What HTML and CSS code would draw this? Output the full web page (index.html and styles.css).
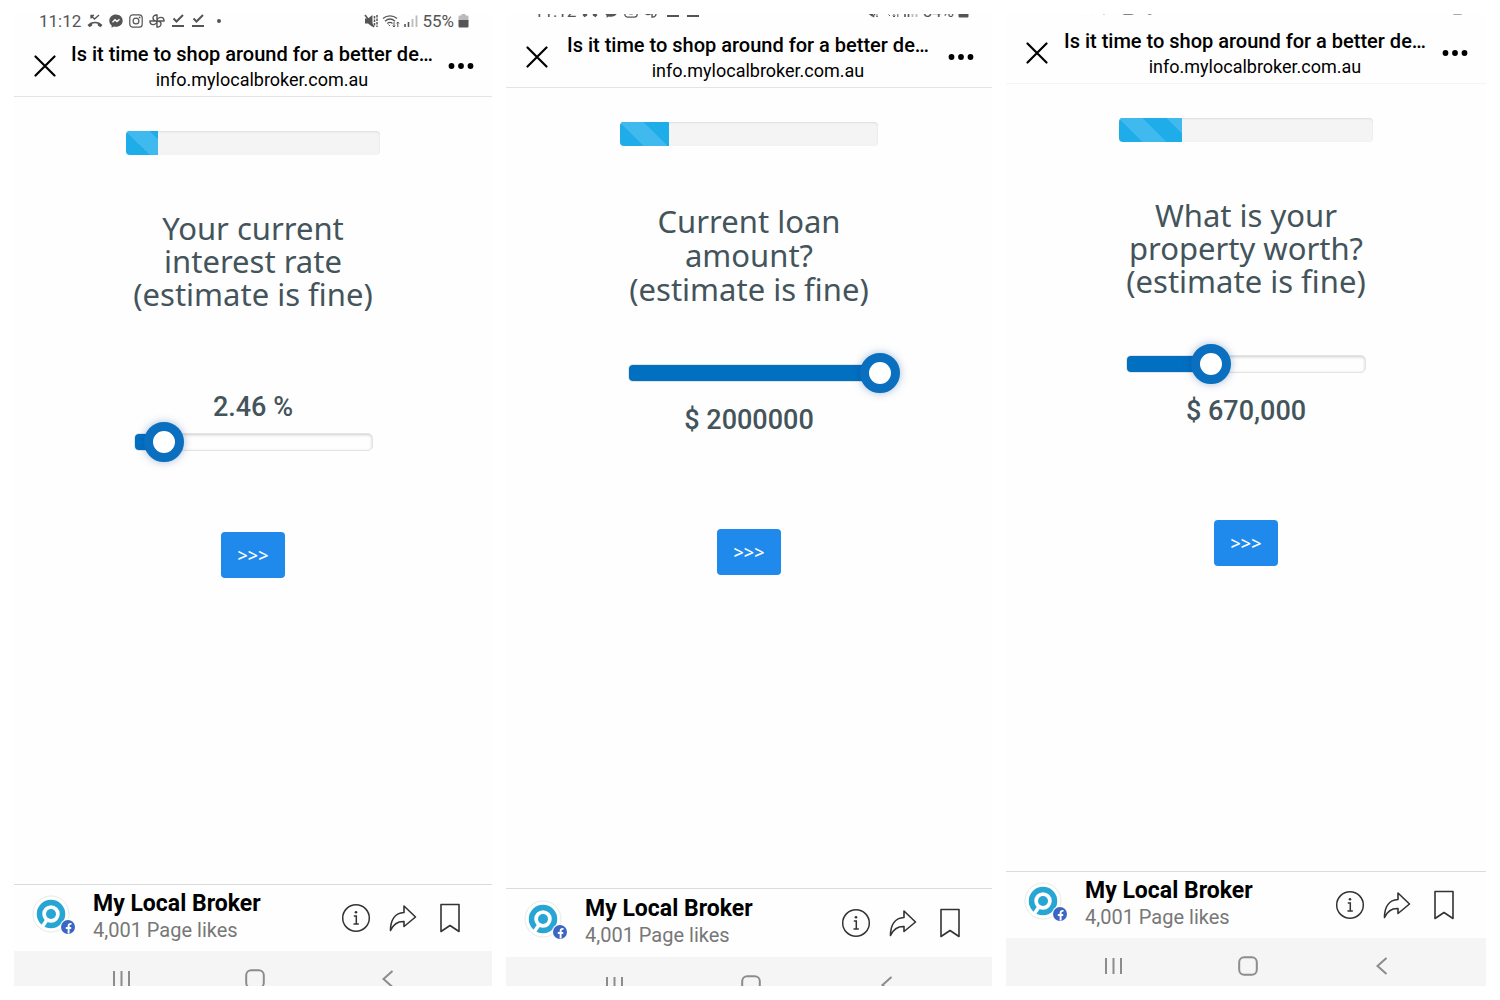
FILE: index.html
```html
<!DOCTYPE html>
<html lang="en">
<head>
    <meta charset="UTF-8">
    <meta name="viewport" content="width=device-width, initial-scale=1.0">
    <title>My Local Broker</title>
    <link rel="stylesheet" href="styles.css">
</head>
<body>
    <!-- shared icons -->
    <svg class="sprite" aria-hidden="true">
        <symbol id="missed" viewBox="0 0 16 14">
            <path d="M.5 11C4 6.500 12 6.500 15.500 11L13.500 13.200L10.800 11.600V9.800C9 9.100 7 9.100 5.200 9.800V11.600L2.500 13.200Z" fill="currentColor"/>
            <path d="M4 4.500V1.500H7M4 1.500L7.500 5L12 1" fill="none" stroke="currentColor" stroke-width="1.300"/>
        </symbol>
        <symbol id="messenger" viewBox="0 0 14 14">
            <path d="M7 .5C3.200.5.3 3.200.3 6.700c0 2 .9 3.600 2.300 4.700v2.300l2.200-1.200c.7.200 1.400.3 2.200.3 3.800 0 6.700-2.700 6.700-6.100S10.800.5 7 .5z" fill="currentColor"/>
            <path d="M3.500 8.300L6 5.700L8 7.500L10.500 5.200" fill="none" stroke="#fff" stroke-width="1.300"/>
        </symbol>
        <symbol id="insta" viewBox="0 0 14 14">
            <g fill="none" stroke="currentColor" stroke-width="1.200">
                <rect x=".8" y=".8" width="12.400" height="12.400" rx="3"/>
                <circle cx="7" cy="7" r="2.900"/>
            </g>
            <circle cx="10.600" cy="3.400" r=".9" fill="currentColor"/>
        </symbol>
        <symbol id="pinwheel" viewBox="0 0 16 14">
            <path d="M8 7V1C5.500.8 4 2.200 4 4C4 6 6 7 8 7H15C15.200 4.600 13.800 3.400 12 3.400C9.800 3.400 8 5 8 7V13C10.500 13.200 12 11.800 12 10C12 8 10 7 8 7H1C.8 9.400 2.200 10.600 4 10.600C6.200 10.600 8 9 8 7Z" fill="none" stroke="currentColor" stroke-width="1.400"/>
        </symbol>
        <symbol id="check" viewBox="0 0 14 14">
            <path d="M2.500 4.500L5.500 7.500L12 1M1 12H13" fill="none" stroke="currentColor" stroke-width="2"/>
        </symbol>
        <symbol id="mute" viewBox="0 0 14 14">
            <path d="M1 4.500H4L8.500 1V13L4 9.500H1Z" fill="currentColor"/>
            <path d="M1 1L10 13" stroke="currentColor" stroke-width="1.500"/>
            <path d="M10.500 2V12M13 1V13" stroke="currentColor" stroke-width="1.500" stroke-dasharray="2.500 1"/>
        </symbol>
        <symbol id="wifi" viewBox="0 0 18 14">
            <path d="M1 4.500C5 1 11 1 15 4.500M3 7.200C6 4.600 10 4.600 13 7.200M5.300 9.500C7 8.200 9 8.200 10.500 9.500" fill="none" stroke="currentColor" stroke-width="1.300"/>
            <path d="M8 12L6.500 10.500M12 8V13M10.700 11.600L12 13L13.300 11.600M15.800 13V8M14.500 9.400L15.800 8L17.100 9.400" fill="none" stroke="currentColor"/>
        </symbol>
        <symbol id="signal" viewBox="0 0 14 14">
            <path d="M1 10V13M4.500 8V13" stroke="currentColor" stroke-width="1.600"/>
            <path d="M8.500 5V13M12.500 1.500V13" stroke="#bbb" stroke-width="1.800"/>
        </symbol>
        <symbol id="battery" viewBox="0 0 11 14">
            <path d="M3.500 0H7.500V1.500H9C10 1.500 10.500 2 10.500 3V7H.5V3C.5 2 1 1.500 2 1.500H3.500Z" fill="#bbb"/>
            <path d="M.5 6H10.500V12C10.500 13 10 13.500 9 13.500H2C1 13.500.5 13 .5 12Z" fill="currentColor"/>
        </symbol>
        <symbol id="close" viewBox="0 0 22 22">
            <path d="M1.500 1.500L20.500 20.500M20.500 1.500L1.500 20.500" stroke="currentColor" stroke-width="2.200" stroke-linecap="round"/>
        </symbol>
        <symbol id="dots" viewBox="0 0 26 6">
            <g fill="currentColor">
                <circle cx="3.500" cy="3" r="2.900"/>
                <circle cx="13" cy="3" r="2.900"/>
                <circle cx="22.500" cy="3" r="2.900"/>
            </g>
        </symbol>
        <symbol id="logo" viewBox="0 0 44 44">
            <circle cx="19" cy="20" r="18" fill="#fff" stroke="#e3ece9"/>
            <circle cx="19" cy="20" r="11.500" fill="none" stroke="#27a5d3" stroke-width="5.500"/>
            <circle cx="19" cy="20" r="5" fill="#27a5d3"/>
            <path d="M14.500 26.500L9.500 34" stroke="#fff" stroke-width="3.500"/>
            <circle cx="36" cy="33" r="8" fill="#fff"/>
            <circle cx="36" cy="33" r="7" fill="#3b66c4"/>
            <path d="M36.600 39.500V32C36.600 30.200 37.600 29.600 39.500 29.900M33.800 34H39.200" fill="none" stroke="#fff" stroke-width="1.900"/>
        </symbol>
        <symbol id="info" viewBox="0 0 30 30">
            <circle cx="15" cy="15" r="13.300" fill="none" stroke="currentColor" stroke-width="1.500"/>
            <path d="M12.800 13H15.300V21M12.500 21H17.800" fill="none" stroke="currentColor" stroke-width="1.500"/>
            <circle cx="15" cy="9.300" r="1.300" fill="currentColor"/>
        </symbol>
        <symbol id="share" viewBox="0 0 28 28">
            <path d="M15 2L26.500 13L15 22.500V17.500C8.500 17.200 4.500 20 1.500 26.500C1.500 16 6 9 15 8.500Z" fill="none" stroke="currentColor" stroke-width="1.600" stroke-linejoin="round"/>
        </symbol>
        <symbol id="bookmark" viewBox="0 0 20 30">
            <path d="M1 1.500H19V28.500L10 22.500L1 28.500Z" fill="none" stroke="currentColor" stroke-width="1.600" stroke-linejoin="round"/>
        </symbol>
        <symbol id="recent" viewBox="0 0 20 20">
            <path d="M2 2V18M9.500 2V18M17 2V18" stroke="currentColor" stroke-width="2"/>
        </symbol>
        <symbol id="home" viewBox="0 0 20 20">
            <rect x="1.200" y="1.200" width="17.600" height="17.600" rx="5" fill="none" stroke="currentColor" stroke-width="2"/>
        </symbol>
        <symbol id="back" viewBox="0 0 20 20">
            <path d="M14.500 2L5.500 10L14.500 18" fill="none" stroke="currentColor" stroke-width="2"/>
        </symbol>
    </svg>

    <main class="phones">
        <section class="phone first">
            <div class="status">
                <span>11:12</span>
                <svg width="16" height="14"><use href="#missed"/></svg>
                <svg width="14" height="14"><use href="#messenger"/></svg>
                <svg width="14" height="14"><use href="#insta"/></svg>
                <svg width="16" height="14"><use href="#pinwheel"/></svg>
                <svg width="14" height="14"><use href="#check"/></svg>
                <svg width="14" height="14"><use href="#check"/></svg>
                <i class="more-dot"></i>
                <div class="status-right">
                    <svg width="14" height="14"><use href="#mute"/></svg>
                    <svg width="18" height="14"><use href="#wifi"/></svg>
                    <svg width="14" height="14"><use href="#signal"/></svg>
                    <span>55%</span>
                    <svg width="11" height="14"><use href="#battery"/></svg>
                </div>
            </div>
            <header class="topbar">
                <button type="button" aria-label="Close"><svg width="22" height="22"><use href="#close"/></svg></button>
                <div class="page-name">
                    <h1>Is it time to shop around for a better de…</h1>
                    <p>info.mylocalbroker.com.au</p>
                </div>
                <button type="button" aria-label="Menu"><svg width="26" height="6"><use href="#dots"/></svg></button>
            </header>
            <form class="survey">
                <div class="progress"><div class="progress-fill" style="width: 12.5%"></div></div>
                <label class="question" for="rate">Your current<br>interest rate<br>(estimate is fine)</label>
                <output class="amount" for="rate">2.46 %</output>
                <div class="slider">
                    <div class="track"><div class="track-fill" style="width: 13%"></div></div>
                    <input type="range" id="rate" min="2" max="7" step="0.01" value="2.46">
                </div>
                <button class="next" type="button">&gt;&gt;&gt;</button>
            </form>
            <footer class="pagebar">
                <svg class="logo" width="44" height="44"><use href="#logo"/></svg>
                <div class="page-info">
                    <h2>My Local Broker</h2>
                    <p>4,001 Page likes</p>
                </div>
                <div class="actions">
                    <button type="button" aria-label="Info"><svg width="30" height="30"><use href="#info"/></svg></button>
                    <button type="button" aria-label="Share"><svg width="28" height="28"><use href="#share"/></svg></button>
                    <button type="button" aria-label="Save"><svg width="20" height="30"><use href="#bookmark"/></svg></button>
                </div>
            </footer>
            <nav class="navbar">
                <button type="button" aria-label="Recent apps"><svg width="20" height="20"><use href="#recent"/></svg></button>
                <button type="button" aria-label="Home"><svg width="20" height="20"><use href="#home"/></svg></button>
                <button type="button" aria-label="Back"><svg width="20" height="20"><use href="#back"/></svg></button>
            </nav>
        </section>

        <section class="phone second">
            <div class="status">
                <span>11:12</span>
                <svg width="16" height="14"><use href="#missed"/></svg>
                <svg width="14" height="14"><use href="#messenger"/></svg>
                <svg width="14" height="14"><use href="#insta"/></svg>
                <svg width="16" height="14"><use href="#pinwheel"/></svg>
                <svg width="14" height="14"><use href="#check"/></svg>
                <svg width="14" height="14"><use href="#check"/></svg>
                <div class="status-right">
                    <svg width="14" height="14"><use href="#mute"/></svg>
                    <svg width="18" height="14"><use href="#wifi"/></svg>
                    <svg width="14" height="14"><use href="#signal"/></svg>
                    <span>54%</span>
                    <svg width="11" height="14"><use href="#battery"/></svg>
                </div>
            </div>
            <header class="topbar">
                <button type="button" aria-label="Close"><svg width="22" height="22"><use href="#close"/></svg></button>
                <div class="page-name">
                    <h1>Is it time to shop around for a better de…</h1>
                    <p>info.mylocalbroker.com.au</p>
                </div>
                <button type="button" aria-label="Menu"><svg width="26" height="6"><use href="#dots"/></svg></button>
            </header>
            <form class="survey">
                <div class="progress"><div class="progress-fill" style="width: 19%"></div></div>
                <label class="question" for="loan">Current loan<br>amount?<br>(estimate is fine)</label>
                <div class="slider">
                    <div class="track"><div class="track-fill" style="width: 100%"></div></div>
                    <input type="range" id="loan" min="50000" max="2000000" step="10000" value="2000000">
                </div>
                <output class="amount" for="loan">$ 2000000</output>
                <button class="next" type="button">&gt;&gt;&gt;</button>
            </form>
            <footer class="pagebar">
                <svg class="logo" width="44" height="44"><use href="#logo"/></svg>
                <div class="page-info">
                    <h2>My Local Broker</h2>
                    <p>4,001 Page likes</p>
                </div>
                <div class="actions">
                    <button type="button" aria-label="Info"><svg width="30" height="30"><use href="#info"/></svg></button>
                    <button type="button" aria-label="Share"><svg width="28" height="28"><use href="#share"/></svg></button>
                    <button type="button" aria-label="Save"><svg width="20" height="30"><use href="#bookmark"/></svg></button>
                </div>
            </footer>
            <nav class="navbar">
                <button type="button" aria-label="Recent apps"><svg width="20" height="20"><use href="#recent"/></svg></button>
                <button type="button" aria-label="Home"><svg width="20" height="20"><use href="#home"/></svg></button>
                <button type="button" aria-label="Back"><svg width="20" height="20"><use href="#back"/></svg></button>
            </nav>
        </section>

        <section class="phone third">
            <div class="status">
                <span>11:12</span>
                <svg width="16" height="14"><use href="#missed"/></svg>
                <svg width="14" height="14"><use href="#messenger"/></svg>
                <svg width="14" height="14"><use href="#insta"/></svg>
                <svg width="16" height="14"><use href="#pinwheel"/></svg>
                <svg width="14" height="14"><use href="#check"/></svg>
                <svg width="14" height="14"><use href="#check"/></svg>
                <div class="status-right">
                    <svg width="11" height="14"><use href="#battery"/></svg>
                </div>
            </div>
            <header class="topbar">
                <button type="button" aria-label="Close"><svg width="22" height="22"><use href="#close"/></svg></button>
                <div class="page-name">
                    <h1>Is it time to shop around for a better de…</h1>
                    <p>info.mylocalbroker.com.au</p>
                </div>
                <button type="button" aria-label="Menu"><svg width="26" height="6"><use href="#dots"/></svg></button>
            </header>
            <form class="survey">
                <div class="progress"><div class="progress-fill" style="width: 25%"></div></div>
                <label class="question" for="worth">What is your<br>property worth?<br>(estimate is fine)</label>
                <div class="slider">
                    <div class="track"><div class="track-fill" style="width: 35%"></div></div>
                    <input type="range" id="worth" min="50000" max="2000000" step="10000" value="670000">
                </div>
                <output class="amount" for="worth">$ 670,000</output>
                <button class="next" type="button">&gt;&gt;&gt;</button>
            </form>
            <footer class="pagebar">
                <svg class="logo" width="44" height="44"><use href="#logo"/></svg>
                <div class="page-info">
                    <h2>My Local Broker</h2>
                    <p>4,001 Page likes</p>
                </div>
                <div class="actions">
                    <button type="button" aria-label="Info"><svg width="30" height="30"><use href="#info"/></svg></button>
                    <button type="button" aria-label="Share"><svg width="28" height="28"><use href="#share"/></svg></button>
                    <button type="button" aria-label="Save"><svg width="20" height="30"><use href="#bookmark"/></svg></button>
                </div>
            </footer>
            <nav class="navbar">
                <button type="button" aria-label="Recent apps"><svg width="20" height="20"><use href="#recent"/></svg></button>
                <button type="button" aria-label="Home"><svg width="20" height="20"><use href="#home"/></svg></button>
                <button type="button" aria-label="Back"><svg width="20" height="20"><use href="#back"/></svg></button>
            </nav>
        </section>
    </main>
</body>
</html>
```
FILE: styles.css
```css
*{
    box-sizing: border-box;
    margin: 0;
    padding: 0;
}
body{
    background: #fff;
    color: #000;
    font-family: Roboto, "Liberation Sans", sans-serif;
}
svg{
    display: block;
    flex: none;
}
button{
    border: none;
    background: none;
    color: inherit;
    cursor: pointer;
}
.sprite{
    position: absolute;
    width: 0;
    height: 0;
}
.phones{
    display: grid;
    grid-template-columns: 478fr 486fr 480fr;
    gap: 14px;
    min-height: 100vh;
    padding: 14px;
}
.phone{
    display: flex;
    flex-direction: column;
    min-width: 0;
    background: #fefefe;
}

/* status bar, scrolled partly off the top */
.status{
    display: flex;
    align-items: flex-end;
    gap: 6px;
    height: 21px;
    padding: 0 23px 7px 25px;
    overflow: hidden;
    color: #555;
    font-size: 17px;
    line-height: 14px;
}
.second .status{
    height: 12px;
    padding: 0 23px 8px 28px;
}
.third .status{
    height: 8px;
}
.more-dot{
    width: 4px;
    height: 4px;
    margin: 0 0 5px 6px;
    border-radius: 50%;
    background: #555;
}
.status-right{
    display: flex;
    align-items: flex-end;
    gap: 4px;
    margin-left: auto;
}

.topbar{
    display: flex;
    align-items: center;
    height: 62px;
    padding: 0 18px 0 20px;
    border-bottom: 1px solid #e4e4e4;
}
.third .topbar{
    border-color: #f4f4f4;
}
.page-name{
    flex: 1;
    min-width: 0;
    padding-top: 2px;
    text-align: center;
    white-space: nowrap;
}
.page-name h1{
    font-size: 20px;
    font-weight: 500;
    line-height: 25px;
}
.page-name p{
    padding-left: 20px;
    font-size: 18px;
    line-height: 25px;
}

.survey{
    display: flex;
    flex: 1;
    flex-direction: column;
    align-items: center;
    padding-top: 34px;
    color: #43545b;
}
.progress{
    width: 53%;
    height: 24px;
    border-radius: 4px;
    background: #f4f4f4;
    box-shadow: inset 0 1px 2px #ddd;
    overflow: hidden;
}
.progress-fill{
    height: 100%;
    background: #1fade9 linear-gradient(45deg, transparent 25%, #3fb9ee 25%, #3fb9ee 50%, transparent 50%, transparent 75%, #3fb9ee 75%) left bottom / 48px 48px;
}
.question{
    margin-top: 57px;
    font-family: "Noto Sans", sans-serif;
    font-size: 31px;
    line-height: 33px;
    text-align: center;
}
.slider{
    position: relative;
    display: flex;
    align-items: center;
    width: 50%;
    height: 40px;
    margin-top: 46px;
}
.track{
    flex: 1;
    height: 18px;
    border: 1px solid #e4e4e4;
    border-radius: 5px;
    box-shadow: inset 0 1px 3px #ccc;
    overflow: hidden;
}
.track-fill{
    height: 100%;
    background: #0270c0;
}
/* the thumb runs past both ends of the track */
.slider input{
    position: absolute;
    left: -11px;
    width: calc(100% + 40px);
    height: 40px;
    appearance: none;
    background: none;
}
.slider input::-webkit-slider-thumb{
    appearance: none;
    width: 40px;
    height: 40px;
    border: 9px solid #0b6fbf;
    border-radius: 50%;
    background: #fff;
    box-shadow: 0 0 8px rgba(0, 60, 140, .35);
}
.amount{
    margin-top: 13px;
    font-size: 27px;
    font-weight: 500;
    line-height: 28px;
}
.next{
    width: 64px;
    height: 46px;
    margin-top: 95px;
    border-radius: 4px;
    background: #1f8aeb;
    color: #fff;
    font-family: "Noto Sans", sans-serif;
    font-size: 18px;
    font-weight: 500;
}
.first .amount{
    margin-top: 82px;
}
.first .slider{
    margin-top: 1px;
}
.first .next{
    margin-top: 70px;
}
.second .question{
    margin-top: 58px;
    line-height: 34px;
}
.second .slider{
    margin-top: 47px;
}

.pagebar{
    display: flex;
    align-items: center;
    height: 67px;
    padding: 0 27px 0 18px;
    border-top: 1px solid #d9dcdd;
}
.second .pagebar{
    height: 69px;
}
.logo{
    margin-bottom: 4px;
}
.page-info{
    margin: 0 auto 2px 17px;
}
.page-info h2{
    font-size: 23px;
    font-weight: 700;
    line-height: 26px;
}
.page-info p{
    color: #777;
    font-size: 20px;
    line-height: 26px;
}
.actions{
    display: flex;
    align-items: center;
    gap: 17px;
    color: #333;
}
.actions button{
    display: grid;
    place-items: center;
    width: 30px;
    height: 30px;
}
.navbar{
    display: flex;
    justify-content: space-around;
    height: 35px;
    padding: 18px 37px 0 41px;
    background: #f5f5f5;
    color: #8c8c8c;
    overflow: hidden;
}
.navbar button{
    height: 20px;
}
.second .navbar{
    height: 29px;
}
.third .navbar{
    height: 48px;
}
```
